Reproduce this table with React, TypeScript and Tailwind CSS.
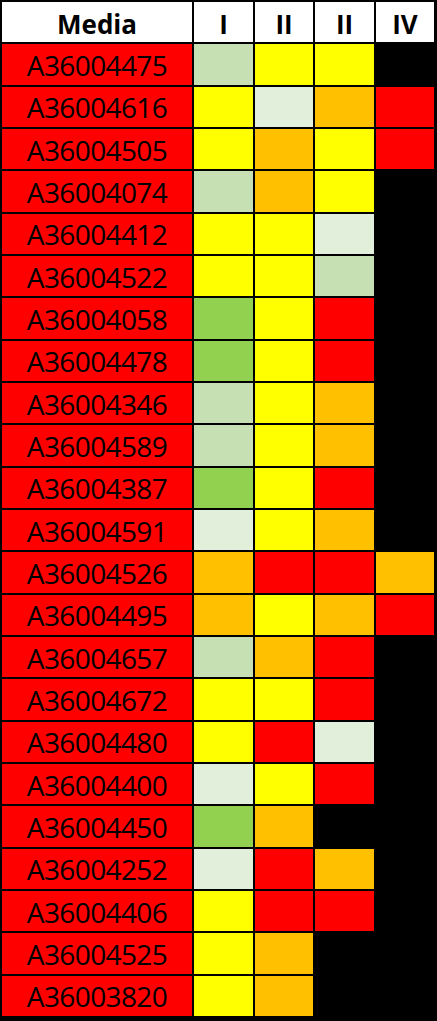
import React from "react";

const C: Record<string, string> = {
  lg: "bg-[#c6e0b4]",
  vlg: "bg-[#e2efda]",
  g: "bg-[#92d050]",
  y: "bg-[#ffff00]",
  o: "bg-[#ffc000]",
  r: "bg-[#ff0000]",
  k: "bg-black",
};

const rows: [string, string, string, string, string][] = [
  ["A36004475", "lg", "y", "y", "k"],
  ["A36004616", "y", "vlg", "o", "r"],
  ["A36004505", "y", "o", "y", "r"],
  ["A36004074", "lg", "o", "y", "k"],
  ["A36004412", "y", "y", "vlg", "k"],
  ["A36004522", "y", "y", "lg", "k"],
  ["A36004058", "g", "y", "r", "k"],
  ["A36004478", "g", "y", "r", "k"],
  ["A36004346", "lg", "y", "o", "k"],
  ["A36004589", "lg", "y", "o", "k"],
  ["A36004387", "g", "y", "r", "k"],
  ["A36004591", "vlg", "y", "o", "k"],
  ["A36004526", "o", "r", "r", "o"],
  ["A36004495", "o", "y", "o", "r"],
  ["A36004657", "lg", "o", "r", "k"],
  ["A36004672", "y", "y", "r", "k"],
  ["A36004480", "y", "r", "vlg", "k"],
  ["A36004400", "vlg", "y", "r", "k"],
  ["A36004450", "g", "o", "k", "k"],
  ["A36004252", "vlg", "r", "o", "k"],
  ["A36004406", "y", "r", "r", "k"],
  ["A36004525", "y", "o", "k", "k"],
  ["A36003820", "y", "o", "k", "k"],
];

const headers = ["Media", "I", "II", "II", "IV"];

export default function App() {
  return (
    <div className="w-[437px] h-[1021px] bg-black pl-[2px] pt-[2px] font-['Open_Sans',sans-serif] text-black">
      <div className="grid grid-cols-[190px_59px_58px_59px_58px] grid-rows-[repeat(24,40.33px)] gap-[2px]">
        {headers.map((h, i) => (
          <div
            key={i}
            className="bg-white flex items-center justify-center pt-[4px] text-[26px] font-bold leading-none"
          >
            {h}
          </div>
        ))}
        {rows.map((r) => (
          <React.Fragment key={r[0]}>
            <div className="bg-[#ff0000] flex items-center justify-center pt-[1px] text-[28px] tracking-[-0.6px] leading-none">
              {r[0]}
            </div>
            {r.slice(1).map((c, j) => (
              <div key={j} className={C[c]} />
            ))}
          </React.Fragment>
        ))}
      </div>
    </div>
  );
}
